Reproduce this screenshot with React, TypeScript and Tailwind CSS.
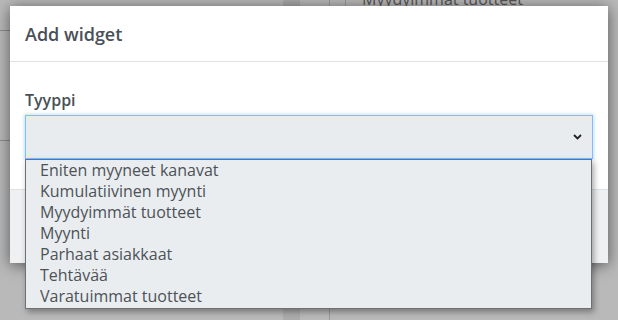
import React from "react";

const options = [
  "Eniten myyneet kanavat",
  "Kumulatiivinen myynti",
  "Myydyimmät tuotteet",
  "Myynti",
  "Parhaat asiakkaat",
  "Tehtävää",
  "Varatuimmat tuotteet",
];

const App = () => {
  return (
    <div className="relative w-[618px] h-[320px] overflow-hidden bg-[#b9b9b9] font-['Open_Sans',sans-serif] pl-[10px] pt-[6px]">
      {/* page behind the overlay */}
      <div className="absolute inset-0">
        <div className="absolute left-0 top-[30px] w-[10px] h-px bg-[#8c8c8c]" />
        <div className="absolute left-0 top-[140px] w-[10px] h-px bg-[#8c8c8c]" />
        <div className="absolute left-[283px] top-0 w-[17px] h-[6px] bg-[#a9a9a9]" />
        <div className="absolute left-[329px] top-0 w-px h-[6px] bg-[#999]" />
        <div className="absolute left-[345px] top-0 w-px h-[6px] bg-[#999]" />
        <div className="absolute left-[283px] bottom-0 w-[17px] h-[12px] bg-[#acacac]" />
        <div className="absolute left-[329px] bottom-0 w-px h-[12px] bg-[#9a9a9a]" />
        <div className="absolute left-[362px] top-[-13px] text-[16px] text-[#555]">Myydyimmät tuotteet</div>
      </div>

      {/* modal */}
      <div className="relative w-[598px] h-[257px] bg-white flex flex-col shadow-[0_2px_14px_rgba(0,0,0,0.55)]">
        <div className="h-[56px] shrink-0 px-[15px] flex items-center border-b border-[#dee2e6]">
          <span className="text-[18px] font-semibold text-[#495057] leading-none">Add widget</span>
        </div>
        <div className="relative px-[15px] pt-[28px] h-[127px] shrink-0">
          <div className="text-[16px] leading-[20px] font-semibold text-[#495057] mb-[5px]">Tyyppi</div>
          <div className="h-[44px] bg-[#e9ecef] border border-[#80bdff] shadow-[0_0_3px_1px_rgba(128,189,255,0.45)] flex items-center justify-end pr-[10px]">
            <svg width="9" height="6" viewBox="0 0 9 6" fill="none">
              <path d="M1 1 L4.5 4.5 L8 1" stroke="#222" strokeWidth="1.8" />
            </svg>
          </div>
          {/* open option list */}
          <div className="absolute left-[15px] top-[97px] w-[567px] h-[150px] bg-[#e9edf0] border border-[#707070] shadow-[2px_3px_6px_rgba(0,0,0,0.35)] z-10 flex flex-col">
            {options.map((o) => (
              <div key={o} className="h-[21px] pl-[14px] text-[16px] leading-[21px] text-[#4d5257]">
                {o}
              </div>
            ))}
          </div>
        </div>
        <div className="flex-1 border-t border-[#dee2e6] bg-[#eef0f2]" />
      </div>
    </div>
  );
};

export default App;
